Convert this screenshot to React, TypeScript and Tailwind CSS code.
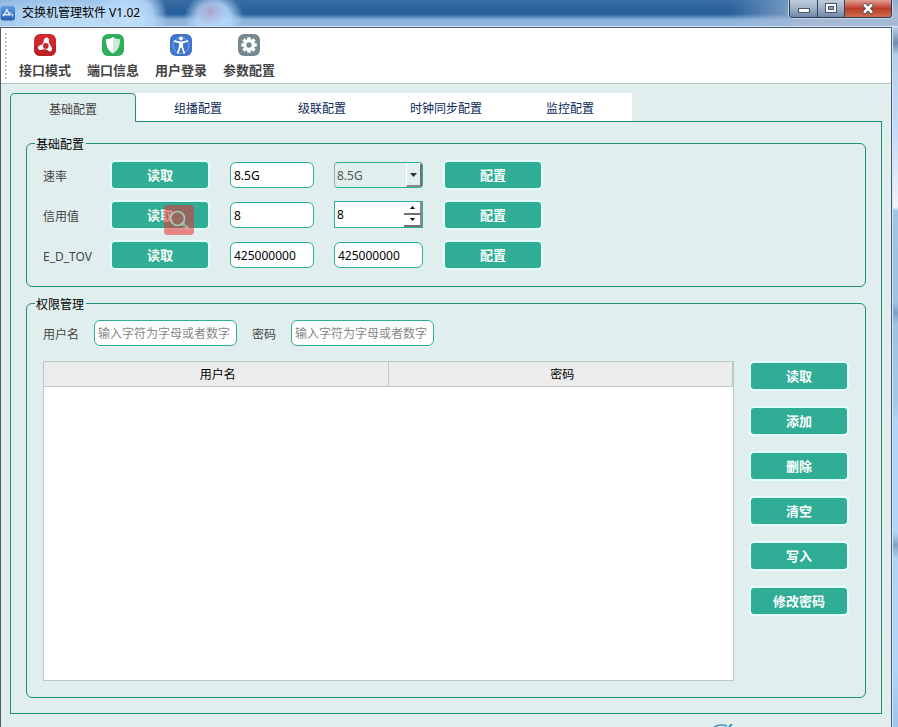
import type { ReactNode } from 'react';

function AppIcon() {
  return (
    <svg className="size-4 shrink-0" viewBox="0 0 16 16" aria-hidden="true">
      <defs>
        <linearGradient id="appIcon" x1="0" y1="0" x2="0" y2="1">
          <stop offset="0" stopColor="#5b9be2" />
          <stop offset="1" stopColor="#2a5fae" />
        </linearGradient>
      </defs>
      <rect x="0.500" y="1" width="14.500" height="14.500" rx="3" fill="url(#appIcon)" />
      <path d="M3.200 11.200 7 5l3 5.600M2.600 9.800h6.600M6.200 4.200l1 1.500" fill="none" stroke="#dcecff" strokeWidth="1.400" />
      <path d="M9.500 7l3.600 4.600M11.500 9.400l2 .2" fill="none" stroke="#a9d0f7" strokeWidth="1.300" />
    </svg>
  );
}

function ModeIcon() {
  return (
    <svg className="size-6" viewBox="0 0 24 24" aria-hidden="true">
      <rect x="1" y="1" width="22" height="22" rx="6" fill="#d0292d" />
      <path d="M1 13h22v4a6 6 0 0 1-6 6H7a6 6 0 0 1-6-6z" fill="#bd2226" />
      <path
        d="M13.400 4.600c1.600 0 2.600 1.100 2.500 2.600-.1 2.300.6 3.900 1.900 5.600 1.500 2 1.700 3.900.6 5-1 1-2.400.7-3.400-.2-1.500-1.300-3.200-1.600-5.100-1-2 .6-4 .4-4.800-.9-.8-1.400.1-2.800 1.600-3.100 2.500-.5 3.700-2 4-4.600.2-2.100 1.100-3.400 2.700-3.400z"
        fill="#fff"
      />
      <circle cx="12.800" cy="12.900" r="2.800" fill="#c3262a" />
    </svg>
  );
}

function ShieldIcon() {
  return (
    <svg className="size-6" viewBox="0 0 24 24" aria-hidden="true">
      <rect x="1" y="1" width="22" height="22" rx="6" fill="#2fae5e" />
      <path d="M12 4c2 1.500 4.300 2.200 7 2.300 0 6-1.500 11-7 14.200z" fill="#cfecd9" />
      <path d="M12 4C10 5.500 7.700 6.200 5 6.300c0 6 1.500 11 7 14.200z" fill="#fff" />
    </svg>
  );
}

function UserIcon() {
  return (
    <svg className="size-6" viewBox="0 0 24 24" aria-hidden="true">
      <rect x="1" y="1" width="22" height="22" rx="6" fill="#3f74cc" />
      <circle cx="12" cy="12.500" r="8" fill="none" stroke="#8db2ec" strokeWidth="0.8" />
      <circle cx="12" cy="5.600" r="2" fill="#fff" />
      <path d="M5.500 8.200l5 1.200h3l5-1.200M12 9.500v4.500M10.800 10v4l-2 6M13.200 10v4l2 6" fill="none" stroke="#fff" strokeWidth="1.700" strokeLinecap="round" />
    </svg>
  );
}

function GearIcon() {
  const teeth = [0, 45, 90, 135, 180, 225, 270, 315];
  return (
    <svg className="size-6" viewBox="0 0 24 24" aria-hidden="true">
      <rect x="1" y="1" width="22" height="22" rx="6" fill="#76898f" />
      {teeth.map((a) => (
        <path key={a} d="M10.400 4.200h3.200l.5 3.500h-4.200z" fill="#fff" transform={`rotate(${a} 12 12)`} />
      ))}
      <circle cx="12" cy="12" r="4.100" fill="none" stroke="#fff" strokeWidth="2.800" />
    </svg>
  );
}

function WindowControls() {
  const shade =
    'flex items-center justify-center bg-linear-to-b from-[#c0cddd] from-0% via-[#a2b4ca] via-45% to-[#6f89aa] to-100%';
  return (
    <div className="flex h-[18px] w-[103px] overflow-hidden rounded-b-[4px] border-x border-b border-[#2a3b52] shadow-[0_0_0_1px_#c5d3e3]">
      <button type="button" aria-label="最小化" className={`${shade} w-7 border-r border-[#33465f]`}>
        <svg className="h-4 w-3" viewBox="0 0 12 16" aria-hidden="true">
          <rect x="0.500" y="7.500" width="11" height="4" fill="#fff" stroke="#4a566a" />
        </svg>
      </button>
      <button type="button" aria-label="最大化" className={`${shade} w-[27px] border-r border-[#33465f]`}>
        <svg className="h-4 w-3" viewBox="0 0 12 16" aria-hidden="true">
          <rect x="0.500" y="2.500" width="11" height="9" fill="#fff" stroke="#4a566a" />
          <rect x="3.500" y="5.500" width="5" height="3" fill="#8fa3bd" stroke="#4a566a" />
        </svg>
      </button>
      <button
        type="button"
        aria-label="关闭"
        className="flex flex-1 items-center justify-center bg-linear-to-b from-[#dfa095] from-0% via-[#bd3a25] via-50% to-[#cb6a50] to-100%"
      >
        <svg className="h-4 w-3" viewBox="0 0 12 16" aria-hidden="true">
          <path d="M1.500 3l9 9M10.500 3l-9 9" stroke="#4c4a5c" strokeWidth="4.500" />
          <path d="M2 3.500l8 8M10 3.500l-8 8" stroke="#fff" strokeWidth="2.600" />
        </svg>
      </button>
    </div>
  );
}

function TitleBar() {
  return (
    <header className="flex h-[27px] shrink-0 items-start justify-between border-b border-[#d5e4f4] bg-[radial-gradient(ellipse_16px_14px_at_210px_12px,#a89cc4cc_0%,#a89cc400_100%),radial-gradient(ellipse_30px_26px_at_214px_18px,#b5d8fb_0%,#b5d8fbdd_55%,#b5d8fb00_100%),radial-gradient(ellipse_38px_30px_at_130px_16px,#c4e0fa_0%,#b5d8f8dd_60%,#b5d8f800_100%),linear-gradient(180deg,#5f94cc55_0px,#5f94cc00_12px),linear-gradient(90deg,#a3c8ea_0px,#bbdaf6_50px,#bbdaf6_110px,#bbdaf600_165px),linear-gradient(90deg,#a5bad400_730px,#a5bad4_820px),linear-gradient(180deg,#25598f_0px,#27609c_14px,#8db3dc_20px,#93b8e0_26px)] pr-[6px]">
      <h1 className="flex items-center gap-[6px] pt-[4px] text-[12px] leading-[18px] font-normal text-black">
        <AppIcon />
        交换机管理软件 V1.02
      </h1>
      <WindowControls />
    </header>
  );
}

function ToolButton({ icon, label }: { icon: ReactNode; label: string }) {
  return (
    <button type="button" className="flex w-[68px] flex-col items-center gap-1 text-[13px] leading-[18px] font-bold text-[#444]">
      {icon}
      {label}
    </button>
  );
}

function Toolbar() {
  return (
    <nav className="flex h-14 shrink-0 items-start border-b border-[#b9c0c0] bg-white pt-[5px] pl-[4px]">
      <span className="mr-[4px] h-[46px] w-[2px] bg-[repeating-linear-gradient(180deg,#c0c0c0_0px,#c0c0c0_2px,transparent_2px,transparent_4px)]" />
      <ToolButton icon={<ModeIcon />} label="接口模式" />
      <ToolButton icon={<ShieldIcon />} label="端口信息" />
      <ToolButton icon={<UserIcon />} label="用户登录" />
      <ToolButton icon={<GearIcon />} label="参数配置" />
    </nav>
  );
}

function ActionButton({ children }: { children: ReactNode }) {
  return (
    <button
      type="button"
      className="h-[30px] w-[100px] shrink-0 rounded-[5px] border-2 border-[#e0fffd] bg-[#30ad95] text-[13px] leading-[26px] font-bold text-white"
    >
      {children}
    </button>
  );
}

const fieldBox = 'h-[26px] rounded-[6px] border border-[#30ad95] bg-white px-[3px] text-[12px] text-black outline-none';

function RateSelect() {
  return (
    <div className="relative w-[89px]">
      <select
        aria-label="速率设置"
        defaultValue="8.5G"
        className="block h-[26px] w-full appearance-none rounded-[4px] border border-[#30ad95] border-l-[#8fb5ae] bg-[#e0eeed] px-[2px] pt-px text-[12px] text-[#555] outline-none"
      >
        <option>8.5G</option>
        <option>4.25G</option>
      </select>
      <span className="pointer-events-none absolute top-px right-px flex h-6 w-4 items-center justify-center border-t border-r-2 border-b-2 border-l border-t-white border-r-[#707070] border-b-[#8a8a8a] border-l-white">
        <svg className="h-1 w-[7px]" viewBox="0 0 7 4" aria-hidden="true">
          <path d="M0 0h7L3.500 4z" fill="#333" />
        </svg>
      </span>
    </div>
  );
}

function CreditSpin() {
  const step = 'flex w-[18px] flex-1 items-center justify-center border-r-2 border-b-2 border-r-[#8a8a8a] border-b-[#707070]';
  return (
    <div className="mb-px flex h-[27px] w-[89px] border border-[#30ad95] bg-white">
      <input
        type="number"
        aria-label="信用值设置"
        defaultValue={8}
        className="min-w-0 flex-1 px-[2px] text-[12px] text-black outline-none [appearance:textfield] [&::-webkit-inner-spin-button]:appearance-none"
      />
      <div className="flex flex-col">
        <button type="button" aria-label="增加" className={step}>
          <svg className="h-[3px] w-[5px]" viewBox="0 0 5 3" aria-hidden="true">
            <path d="M0 3h5L2.500 0z" fill="#000" />
          </svg>
        </button>
        <button type="button" aria-label="减少" className={step}>
          <svg className="h-[3px] w-[5px]" viewBox="0 0 5 3" aria-hidden="true">
            <path d="M0 0h5L2.500 3z" fill="#000" />
          </svg>
        </button>
      </div>
    </div>
  );
}

function SearchBadge() {
  return (
    <span className="pointer-events-none absolute top-[5px] left-[54px] flex size-[30px] items-center justify-center rounded-[4px] bg-[#eb2f2f]/55">
      <svg className="size-5" viewBox="0 0 20 20" fill="none" stroke="#9fc9bd" aria-hidden="true">
        <circle cx="8.500" cy="8.500" r="7" strokeWidth="1.700" />
        <path d="M13.500 13.500l4.500 4" strokeWidth="3" strokeLinecap="round" />
        <path d="M14.500 14.300l3.200 2.900" stroke="#8c5d50" strokeWidth="1" />
      </svg>
    </span>
  );
}

function SettingRow({ id, label, value, badge, children }: { id: string; label: string; value: string; badge?: boolean; children: ReactNode }) {
  return (
    <div className="flex h-[30px] items-center">
      <label htmlFor={id} className="w-[67px] pt-[3px] text-[12px] text-[#444]">
        {label}
      </label>
      <div className="flex items-center gap-5">
        <div className="relative flex">
          <ActionButton>读取</ActionButton>
          {badge && <SearchBadge />}
        </div>
        <input id={id} readOnly defaultValue={value} className={`${fieldBox} w-[84px]`} />
        {children}
        <ActionButton>配置</ActionButton>
      </div>
    </div>
  );
}

const groupBox = 'rounded-[6px] border border-[#1f8f78] px-2 pt-2 pb-4';
const groupTitle = 'px-px pt-1 pr-[2px] text-[12px] leading-[14px] text-black';

function BasicGroup() {
  return (
    <fieldset className={groupBox}>
      <legend className={groupTitle}>基础配置</legend>
      <div className="flex flex-col gap-[10px] px-2">
        <SettingRow id="rate" label="速率" value="8.5G">
          <RateSelect />
        </SettingRow>
        <SettingRow id="credit" label="信用值" value="8" badge>
          <CreditSpin />
        </SettingRow>
        <SettingRow id="edtov" label="E_D_TOV" value="425000000">
          <input aria-label="E_D_TOV 设置" defaultValue="425000000" className={`${fieldBox} w-[89px]`} />
        </SettingRow>
      </div>
    </fieldset>
  );
}

function AccessGroup() {
  const actions = ['读取', '添加', '删除', '清空', '写入', '修改密码'];
  const hint = '输入字符为字母或者数字';
  const headCell = 'border-r border-b border-[#c0c6ca] p-0 pt-[2px] pl-1 leading-4 font-normal';
  return (
    <fieldset className={`${groupBox} flex flex-1 flex-col`}>
      <legend className={groupTitle}>权限管理</legend>
      <div className="flex items-center px-2 text-[12px] text-[#444]">
        <label htmlFor="user" className="w-[51px] pt-[3px]">
          用户名
        </label>
        <input id="user" placeholder={hint} className={`${fieldBox} mr-[15px] w-[143px] placeholder:text-[#888]`} />
        <label htmlFor="pass" className="w-[39px] pt-[3px]">
          密码
        </label>
        <input id="pass" placeholder={hint} className={`${fieldBox} w-[143px] placeholder:text-[#888]`} />
      </div>
      <div className="mt-[15px] flex flex-1 gap-[15px] px-2">
        <div className="flex-1 border border-[#c0c6ca] bg-white">
          <table className="w-full table-fixed border-collapse text-[12px] text-black">
            <thead>
              <tr className="h-6 bg-[#ececec]">
                <th scope="col" className={headCell}>
                  用户名
                </th>
                <th scope="col" className={headCell}>
                  密码
                </th>
              </tr>
            </thead>
            <tbody />
          </table>
        </div>
        <div className="flex flex-col gap-[15px]">
          {actions.map((a) => (
            <ActionButton key={a}>{a}</ActionButton>
          ))}
        </div>
      </div>
    </fieldset>
  );
}

function Tabs() {
  const others = ['组播配置', '级联配置', '时钟同步配置', '监控配置'];
  return (
    <div role="tablist" className="flex items-start text-[12px]">
      <button
        type="button"
        role="tab"
        aria-selected="true"
        className="z-10 -mb-px h-[29px] w-[126px] rounded-t-[5px] border-x border-t border-[#1f8f78] bg-[#e0eeed] pt-[3px] text-[#444]"
      >
        基础配置
      </button>
      {others.map((t) => (
        <button key={t} type="button" role="tab" aria-selected="false" className="h-7 w-[124px] bg-white pt-[3px] text-[#0b2a5b]">
          {t}
        </button>
      ))}
    </div>
  );
}

function FooterMark() {
  return (
    <div className="flex h-[13px] items-end justify-end pr-[149px]">
      <svg className="h-[3px] w-[20px]" viewBox="0 0 20 3" fill="none" aria-hidden="true">
        <path d="M1 3Q8 -0.500 14 2" stroke="#3d93bd" strokeWidth="1.500" />
        <path d="M19 0l-3 3" stroke="#1b73a6" strokeWidth="1.500" />
      </svg>
    </div>
  );
}

export default function App() {
  return (
    <div className="flex min-h-screen flex-col overflow-hidden bg-[#e0eeed] font-['Noto_Sans','Noto_Sans_CJK_SC',sans-serif]">
      <TitleBar />
      <div className="flex flex-1">
        <div className="flex flex-1 flex-col border-x border-t border-[#4c5c72]">
          <Toolbar />
          <main className="flex flex-1 flex-col px-[9px] pt-[9px]">
            <Tabs />
            <section role="tabpanel" className="flex flex-1 flex-col gap-[7px] border border-[#1f8f78] px-[15px] pt-3 pb-[15px]">
              <BasicGroup />
              <AccessGroup />
            </section>
            <FooterMark />
          </main>
        </div>
        <div className="w-[6px] border-l border-[#d5e4f4] bg-[linear-gradient(180deg,#b7cfe8_0px,#6f8db0_16px,#b4cfec_28px,#c6dcf6_110px,#eef5fd_180px,#a0c4e4_184px,#9fc2e4_275px,#7f9fca_286px,#9fc2e4_297px,#a4c8ea_375px,#b2d6fb_395px,#b2d6fb_505px,#86a3c4_518px,#b0d4f8_532px,#b2d6fb_640px,#9cc4ee_700px)]" />
      </div>
    </div>
  );
}
